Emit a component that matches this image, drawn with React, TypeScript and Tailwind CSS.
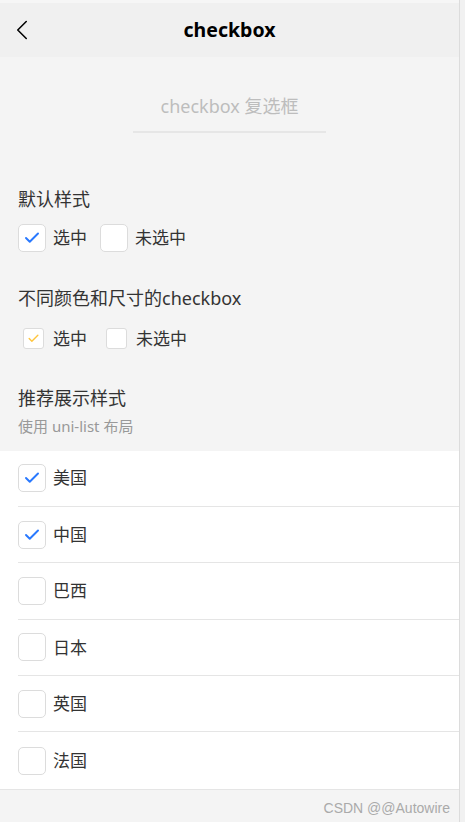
import { Check, ChevronLeft } from 'lucide-react';

const font = { fontFamily: '"Noto Sans", "Noto Sans CJK SC", sans-serif' };

function Box({ checked, size = 'lg', color = 'text-[#2979ff]' }: { checked?: boolean; size?: 'lg' | 'sm'; color?: string }) {
  const dim = size === 'lg' ? 'w-[28px] h-[28px] rounded-[5px]' : 'w-[21px] h-[21px] rounded-[3px]';
  return (
    <div className={`${dim} bg-white border border-[#dcdcdc] flex items-center justify-center shrink-0`}>
      {checked && <Check className={`${size === 'lg' ? 'w-[18px] h-[18px]' : 'w-[13px] h-[13px]'} ${color}`} strokeWidth={2.6} />}
    </div>
  );
}

const countries = [
  { name: '美国', checked: true },
  { name: '中国', checked: true },
  { name: '巴西', checked: false },
  { name: '日本', checked: false },
  { name: '英国', checked: false },
  { name: '法国', checked: false },
];

export default function App() {
  return (
    <div className="w-[465px] h-[822px] flex bg-[#f4f4f4] overflow-hidden" style={font}>
      <div className="flex-1 flex flex-col">
        <div className="h-[3px] bg-[#f6f6f6]" />
        <header className="h-[54px] bg-[#f0f0f0] flex items-center relative">
          <ChevronLeft className="w-[34px] h-[34px] ml-[5px] text-black" strokeWidth={1.1} />
          <span className="absolute left-0 right-0 text-center text-[19.5px] font-bold text-black pointer-events-none">checkbox</span>
        </header>

        <div className="flex flex-col items-center pt-[36px]">
          <span className="text-[18px] leading-[27px] text-[#bdbdbd]">checkbox 复选框</span>
          <div className="w-[193px] h-[2px] bg-[#e6e6e6] mt-[11px]" />
        </div>

        <div className="px-[18px] pt-[53px]">
          <div className="text-[18px] leading-[27px] text-[#333]">默认样式</div>
          <div className="flex items-center mt-[11px] text-[17px] text-[#333]">
            <Box checked />
            <span className="ml-[7px]">选中</span>
            <div className="ml-[13px]"><Box /></div>
            <span className="ml-[7px]">未选中</span>
          </div>

          <div className="text-[18px] leading-[27px] text-[#333] mt-[33px]">不同颜色和尺寸的checkbox</div>
          <div className="flex items-center mt-[14px] pl-[5px] text-[17px] text-[#333]">
            <Box checked size="sm" color="text-[#ffc53d]" />
            <span className="ml-[9px]">选中</span>
            <div className="ml-[19px]"><Box size="sm" /></div>
            <span className="ml-[9px]">未选中</span>
          </div>

          <div className="text-[18px] leading-[27px] text-[#333] mt-[33px]">推荐展示样式</div>
          <div className="text-[15px] leading-[22px] text-[#999] mt-[3px]">使用 uni-list 布局</div>
        </div>

        <div className="bg-white mt-[14px] border-b border-[#e5e5e5]">
          {countries.map((c, i) => (
            <div key={c.name} className="pl-[18px]">
              <div className={`h-[56.4px] flex items-center ${i < countries.length - 1 ? 'border-b border-[#e5e5e5]' : ''}`}>
                <Box checked={c.checked} />
                <span className="ml-[7px] text-[17px] text-[#333]">{c.name}</span>
              </div>
            </div>
          ))}
        </div>

        <div className="flex justify-end pr-[9px] pt-[8px]">
          <span className="text-[14px] text-[#aaa]" style={{ fontFamily: '"Liberation Sans", Arial, sans-serif' }}>CSDN @@Autowire</span>
        </div>
      </div>
      <div className="w-[6px] border-l border-[#dcdcdc] bg-[#f1f1f1]" />
    </div>
  );
}
